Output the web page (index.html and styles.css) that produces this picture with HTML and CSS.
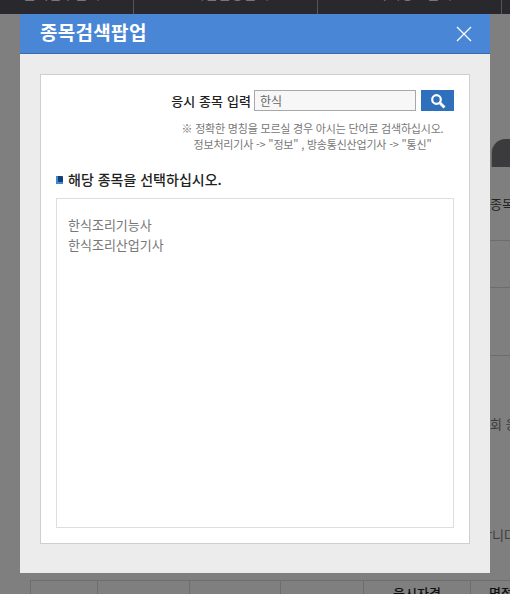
FILE: index.html
```html
<!DOCTYPE html>
<html lang="ko">
<head>
<meta charset="utf-8">
<title>종목검색팝업</title>
<link rel="stylesheet" href="styles.css">
</head>
<body>
<div class="page">
  <div class="topbar">
    <div class="topcell c1"><span>원서접수안내</span></div>
    <div class="topcell c2"><span>시험일정안내</span></div>
    <div class="topcell c3"><span>자격정보안내</span></div>
    <div class="topcell c4"></div>
  </div>
  <div class="side">
    <div class="tab"></div>
    <div class="side-title">종목별</div>
    <div class="rule r1"></div>
    <div class="rule r2"></div>
    <div class="rule r3"></div>
    <div class="side-text t1">회 응시</div>
    <div class="side-text t2">합니다</div>
  </div>
  <div class="bottom-table">
    <div class="bcell w1"></div>
    <div class="bcell w2"></div>
    <div class="bcell w3"></div>
    <div class="bcell w4"></div>
    <div class="bcell w5"><b>응시자격</b></div>
    <div class="bcell w6"><b>면접</b></div>
  </div>
</div>
<div class="modal">
  <div class="modal-head">
    <h1>종목검색팝업</h1>
    <svg class="close" width="16" height="16" viewBox="0 0 16 16"><path d="M1 1 15 15M15 1 1 15" stroke="#fff" stroke-width="1.3" fill="none"/></svg>
  </div>
  <div class="modal-body">
    <div class="panel">
      <div class="search">
        <label class="search-label">응시 종목 입력</label>
        <div class="search-input">한식</div>
        <button class="search-btn" type="button">
          <svg width="16" height="16" viewBox="0 0 16 16"><circle cx="6.5" cy="6.5" r="4.3" fill="none" stroke="#fff" stroke-width="2.2"/><path d="M10 10 14.5 14.5" stroke="#fff" stroke-width="2.8" fill="none"/></svg>
        </button>
      </div>
      <p class="hint">※ 정확한 명칭을 모르실 경우 아시는 단어로 검색하십시오.<br>정보처리기사 -&gt; "정보" , 방송통신산업기사 -&gt; "통신"</p>
      <h2 class="select-title"><span class="bullet"></span>해당 종목을 선택하십시오.</h2>
      <div class="list">
        <div class="item">한식조리기능사</div>
        <div class="item">한식조리산업기사</div>
      </div>
    </div>
  </div>
</div>
</body>
</html>
```
FILE: styles.css
```css
* { box-sizing: border-box; }
html, body { margin: 0; padding: 0; }
body {
  width: 510px;
  height: 594px;
  overflow: hidden;
  background: #7f7f7f;
  font-family: "Noto Sans CJK KR", "Noto Sans", sans-serif;
  position: relative;
}
.page { height: 594px; display: flex; flex-direction: column; overflow: hidden; }
.topbar { height: 14px; background: #29292d; display: flex; flex: none; overflow: hidden; }
.topcell {
  height: 14px;
  border-right: 1px solid #55555a;
  color: #77777a;
  font-size: 14px;
  line-height: 14px;
  text-align: center;
  overflow: hidden;
}
.topcell span { display: block; margin-top: -14px; }
.c1 { width: 134px; padding-right: 10px; }
.c2 { width: 184px; padding-left: 10px; }
.c3 { width: 184px; padding-left: 8px; }
.c4 { flex: 1; border-right: 0; }
.side { flex: none; height: 552px; margin-left: 490px; width: 40px; display: flex; flex-direction: column; }
.tab { margin-top: 125px; margin-left: 2px; height: 28px; width: 30px; background: #3b3b3d; border-top-left-radius: 14px; box-shadow: -1px 0 0 #6d6d6d; flex: none; }
.side-title { margin-top: 29px; height: 16px; font-size: 13px; line-height: 16px; color: #222; white-space: nowrap; }
.rule { height: 1px; background: #6d6d6d; flex: none; }
.r1 { margin-top: 28px; }
.r2 { margin-top: 46px; }
.r3 { margin-top: 67px; }
.side-text { font-size: 13px; line-height: 16px; color: #3c3c3c; white-space: nowrap; }
.t1 { margin-top: 60px; }
.t2 { margin-top: 95px; margin-left: -10px; }
.bottom-table { position: absolute; left: 30px; top: 580px; height: 14px; display: flex; border-top: 1px solid #6d6d6d; border-left: 1px solid #6d6d6d; }
.bcell { height: 14px; border-right: 1px solid #6d6d6d; font-size: 13px; line-height: 23px; color: #111; text-align: center; white-space: nowrap; overflow: hidden; }
.bcell b { font-weight: 500; }
.w1 { width: 67px; }
.w2 { width: 92px; }
.w3 { width: 91px; }
.w4 { width: 83px; }
.w5 { width: 107px; }
.w6 { width: 60px; border-right: 0; }

.modal {
  position: absolute;
  left: 20px;
  top: 14px;
  width: 470px;
  height: 559px;
  background: #ececec;
  display: flex;
  flex-direction: column;
}
.modal-head {
  height: 40px;
  flex: none;
  background: #4a86d6;
  border-bottom: 1px solid #3a6cab;
  display: flex;
  align-items: center;
  justify-content: space-between;
  padding: 0 18px 0 20px;
}
.modal-head h1 { margin: -4px 0 0; font-size: 19px; line-height: 32px; font-weight: 700; color: #fff; letter-spacing: 0.3px; }
.close { display: block; }
.modal-body { padding: 20px; flex: 1; display: flex; flex-direction: column; min-height: 0; }
.panel {
  flex: 1;
  margin-bottom: 9px;
  background: #fff;
  border: 1px solid #cfcfcf;
  padding: 15px;
  display: flex;
  flex-direction: column;
  min-height: 0;
}
.search { display: flex; justify-content: flex-end; align-items: center; gap: 4px; height: 21px; flex: none; }
.search-label { font-size: 13px; font-weight: 500; color: #222; line-height: 20px; white-space: nowrap; letter-spacing: 0.1px; margin-right: -1px; }
.search-input {
  width: 162px;
  height: 21px;
  border: 1px solid #a8a8a8;
  background: #f7f7f7;
  font-size: 12px;
  line-height: 20px;
  color: #666;
  padding-left: 5px;
}
.search-btn {
  width: 33px;
  height: 21px;
  margin-left: 1px;
  padding: 0;
  border: 0;
  background: #2f70bd;
  display: flex;
  align-items: center;
  justify-content: center;
}
.hint { margin: 9px 0 0 115px; width: 283px; font-size: 11px; line-height: 16px; color: #777; text-align: center; letter-spacing: -0.2px; flex: none; }
.select-title { margin: 16px 0 0; height: 22px; font-size: 14px; line-height: 22px; font-weight: 500; color: #222; display: flex; align-items: center; flex: none; white-space: nowrap; }
.bullet { width: 7px; height: 8px; margin-right: 5px; margin-top: 1px; background: #123f7a; border-radius: 1px; box-shadow: inset 2px -2px 0 #3f8ad0; flex: none; }
.list { flex: 1; margin-top: 8px; border: 1px solid #dedede; padding: 16px 11px; min-height: 0; }
.item { font-size: 13px; line-height: 20px; color: #777; }
```
